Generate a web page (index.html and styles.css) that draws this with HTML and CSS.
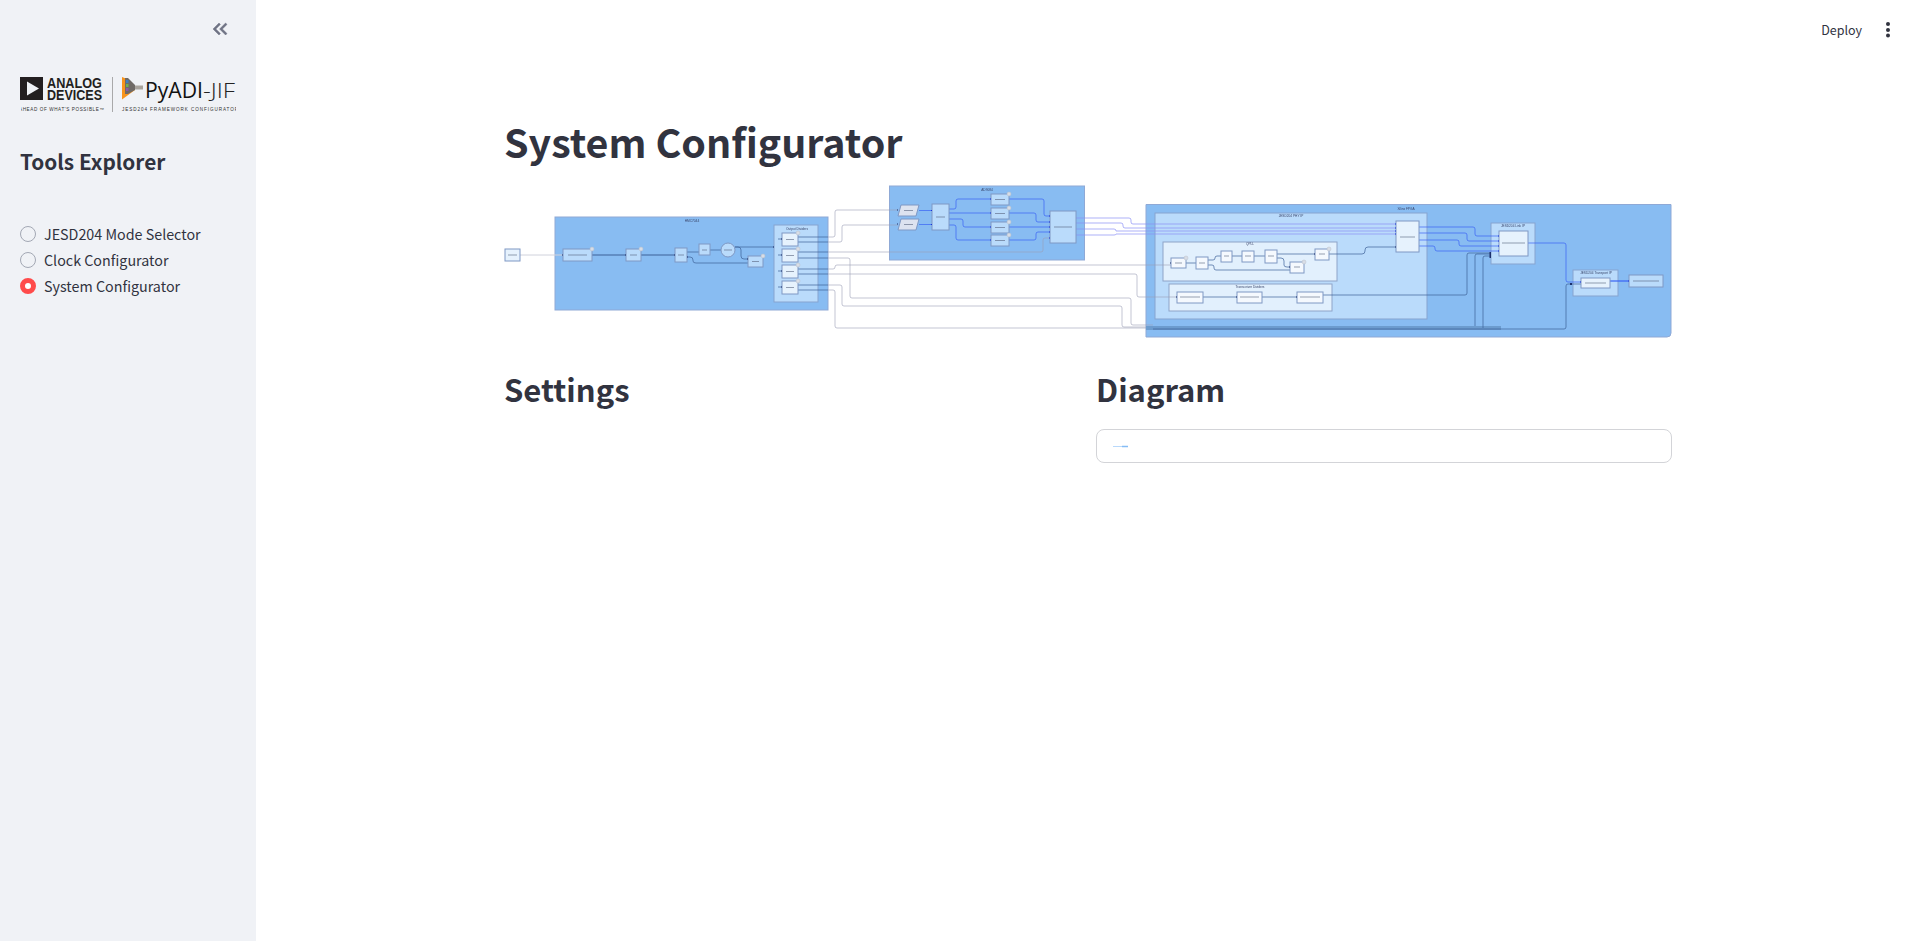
FILE: index.html
```html
<!DOCTYPE html>
<html lang="en">
<head>
    <meta charset="UTF-8">
    <meta name="viewport" content="width=device-width, initial-scale=1.0">
    <title>System Configurator</title>
    <link rel="stylesheet" href="styles.css">
</head>
<body>
    <aside class="sidebar">
        <div class="sidebar-top">
            <svg class="collapse-icon" viewBox="0 0 24 24" width="24" height="24">
                <path d="M17.59 18 19 16.59 14.42 12 19 7.41 17.59 6l-6 6zM11 18l1.41-1.41L7.83 12l4.58-4.59L11 6l-6 6z"/>
            </svg>
        </div>
        <svg class="logo" viewBox="20 76 216 37" width="216" height="37">
            <defs>
                <clipPath id="logo-clip"><rect x="21" y="76" width="215" height="37"/></clipPath>
            </defs>
            <rect x="20" y="77" width="23" height="23" fill="#231f20"/>
            <polygon points="27,81.5 39,88.5 27,95.5" fill="#f0f2f6"/>
            <text class="logo-adi" x="47" y="87.500" textLength="55" lengthAdjust="spacingAndGlyphs">ANALOG</text>
            <text class="logo-adi" x="47" y="99.500" textLength="55" lengthAdjust="spacingAndGlyphs">DEVICES</text>
            <g clip-path="url(#logo-clip)">
                <text class="logo-small" x="19" y="111" textLength="85" lengthAdjust="spacing">AHEAD OF WHAT'S POSSIBLE™</text>
                <text class="logo-small" x="122" y="111" textLength="116" lengthAdjust="spacing">JESD204 FRAMEWORK CONFIGURATOR</text>
            </g>
            <line x1="112.500" y1="77" x2="112.500" y2="112" stroke="#8a8a8a" stroke-width="0.7"/>
            <polygon points="122,77 127,79 135,86 135,90 122,99.500" fill="#f7941d"/>
            <polygon points="125,78 128,78 135,85 135,90 128,94 125,94" fill="#6f6a66"/>
            <rect x="126" y="80" width="2.500" height="3" fill="#3f7fbf"/>
            <rect x="126" y="84" width="2.500" height="3" fill="#6fae4f"/>
            <rect x="126" y="88" width="2.500" height="3" fill="#8c5aa5"/>
            <rect x="135" y="85.500" width="8" height="4" fill="#a8a39c"/>
            <text class="logo-pyadi" x="145" y="98" textLength="58" lengthAdjust="spacingAndGlyphs">PyADI</text>
            <text class="logo-jif" x="203" y="98" textLength="32" lengthAdjust="spacingAndGlyphs">-JIF</text>
        </svg>
        <h2 class="sidebar-title">Tools Explorer</h2>
        <div class="radio-list">
            <div class="radio-row"><span class="radio"></span>JESD204 Mode Selector</div>
            <div class="radio-row"><span class="radio"></span>Clock Configurator</div>
            <div class="radio-row"><span class="radio checked"></span>System Configurator</div>
        </div>
    </aside>

    <div class="main">
        <header class="topbar">
            <span class="deploy">Deploy</span>
            <svg class="kebab" viewBox="0 0 6 18" width="6" height="18">
                <circle cx="3" cy="3" r="2"/><circle cx="3" cy="9" r="2"/><circle cx="3" cy="14.600" r="2"/>
            </svg>
        </header>
        <main class="content">
            <h1>System Configurator</h1>

            <!-- coordinates in this svg are the page coordinates -->
            <svg class="diagram" viewBox="504 185 1168 155" width="1168" height="155">
                <!-- clusters -->
                <rect class="c1" x="555" y="217" width="273" height="93"/>
                <rect class="c1" x="889.500" y="186" width="195" height="74"/>
                <path class="c1" d="M1146 204.500H1671V333Q1671 337 1667 337H1146Z"/>
                <rect class="c2" x="774" y="225" width="44" height="77"/>
                <rect class="c2" x="1155" y="213" width="272" height="106"/>
                <rect class="c3" x="1163" y="242" width="174" height="39"/>
                <rect class="c3" x="1169" y="284" width="163" height="27"/>
                <rect class="c2" x="1491" y="223" width="44" height="41"/>
                <rect class="c2" x="1573" y="270" width="45" height="26"/>

                <!-- wires on white -->
                <g class="wire grey">
                    <path d="M828 237H833Q835 237 835 235V212Q835 210 837 210H898"/>
                    <path d="M828 242H840Q842 242 842 240V227Q842 225 844 225H898"/>
                    <path d="M828 252H1041Q1043 252 1043 250V240Q1043 238 1045 238H1050"/>
                    <path d="M828 258H848Q850 258 850 260V296Q850 298 852 298H1129Q1131 298 1131 300V323Q1131 325 1133 325H1153"/>
                    <path d="M828 269H833Q835 269 835 267Q835 265 837 265H1171"/>
                    <path d="M828 274H1135Q1137 274 1137 276V295Q1137 297 1139 297H1177"/>
                    <path d="M828 285H840Q842 285 842 287V304Q842 306 844 306H1120Q1122 306 1122 308V325Q1122 327 1124 327H1153"/>
                    <path d="M828 290H833Q835 290 835 292V326Q835 328 837 328H1153"/>
                </g>
                <path class="wire pale" d="M520 255H563"/>
                <g class="wire light-blue">
                    <path d="M1076 218H1129Q1131 218 1131 220V222Q1131 224 1133 224H1396"/>
                    <path d="M1076 223H1121Q1123 223 1123 225V226Q1123 228 1125 228H1396"/>
                    <path d="M1076 229H1114Q1116 229 1116 231H1396"/>
                    <path d="M1076 235H1114Q1116 235 1116 234H1396"/>
                </g>

                <!-- bottom band -->
                <rect class="band" x="1146" y="326" width="355" height="4"/>

                <!-- HMC7044 wires -->
                <g class="wire slate">
                    <path class="thick" d="M592 255H626M641 255H675"/>
                    <path d="M687 252H699M710 250H721M735 247H738Q741 247 741 250V256Q741 259 744 259H748"/>
                    <path d="M687 257H690Q693 257 693 260V261Q693 263 696 263H748"/>
                    <path d="M735 247H774"/>
                    <path d="M778 239H782M778 255H782M778 271H782M778 287H782"/>
                    <path d="M798 237H828M798 242H828M798 252H828M798 258H828M798 269H828M798 274H828M798 285H828M798 290H828"/>
                </g>
                <!-- AD9084 wires -->
                <g class="wire blue">
                    <path d="M919 210.500H932M919 224.500H932"/>
                    <path d="M949 209H954Q956 209 956 207V201Q956 199 958 199H991"/>
                    <path d="M949 213H991"/>
                    <path d="M949 219H961Q963 219 963 221V225Q963 227 965 227H991"/>
                    <path d="M949 225H954Q956 225 956 227V238Q956 240 958 240H991"/>
                    <path d="M1009 199H1042Q1044 199 1044 201V214Q1044 216 1046 216H1050"/>
                    <path d="M1009 213H1034Q1036 213 1036 215V220Q1036 222 1038 222H1050"/>
                    <path d="M1009 227H1050"/>
                    <path d="M1009 240H1034Q1036 240 1036 238V234Q1036 232 1038 232H1050"/>
                </g>
                <!-- FPGA wires -->
                <g class="wire slate">
                    <path d="M1186 263H1196M1208 260H1213Q1215 260 1215 258V258Q1215 256 1217 256H1221M1232 256H1242M1254 256H1265"/>
                    <path d="M1208 265H1212Q1214 265 1214 267V268Q1214 270 1216 270H1290"/>
                    <path d="M1277 254H1315M1277 258H1281Q1284 258 1284 261V265Q1284 267 1287 267H1290"/>
                    <path d="M1329 254H1362Q1365 254 1365 251V250Q1365 247 1368 247H1396"/>
                    <path d="M1203 297H1237M1262 297H1297"/>
                    <path d="M1323 295H1465Q1467 295 1467 293V255Q1467 253 1469 253H1491"/>
                    <path d="M1475 326V256Q1475 254 1477 254H1491"/>
                    <path d="M1483 328V258Q1483 256 1485 256H1491"/>
                    <path d="M1153 329H1564Q1566 329 1566 327V286Q1566 284 1568 284H1581"/>
                </g>
                <g class="wire blue">
                    <path d="M1419 227H1473Q1475 227 1475 229V234Q1475 236 1477 236H1499"/>
                    <path d="M1419 233H1465Q1467 233 1467 235V239Q1467 241 1469 241H1499"/>
                    <path d="M1419 240H1457Q1459 240 1459 242V244Q1459 246 1461 246H1499"/>
                    <path d="M1419 246H1433Q1435 246 1435 248V249Q1435 251 1437 251H1499"/>
                    <path d="M1528 243H1564Q1566 243 1566 245V280Q1566 282 1568 282H1581"/>
                    <path class="thick" d="M1610 281H1629"/>
                </g>

                <!-- nodes -->
                <rect class="n light" x="505" y="249" width="15" height="12"/>
                <rect class="n mid" x="563" y="249" width="29" height="12"/>
                <rect class="n mid" x="626" y="249" width="15" height="12"/>
                <rect class="n mid" x="675" y="248" width="12" height="14"/>
                <rect class="n mid" x="699" y="244" width="11" height="11"/>
                <circle class="n mid" cx="728" cy="250" r="7"/>
                <rect class="n mid" x="748" y="256" width="15" height="11"/>
                <rect class="n light" x="782" y="233" width="16" height="13"/>
                <rect class="n light" x="782" y="249" width="16" height="13"/>
                <rect class="n light" x="782" y="265" width="16" height="13"/>
                <rect class="n light" x="782" y="281" width="16" height="13"/>

                <polygon class="n pale-node" points="901,205 919,205 916,216 898,216"/>
                <polygon class="n pale-node" points="901,219 919,219 916,230 898,230"/>
                <rect class="n mid" x="932" y="204" width="17" height="26"/>
                <rect class="n mid" x="991" y="194" width="18" height="11"/>
                <rect class="n mid" x="991" y="208" width="18" height="11"/>
                <rect class="n mid" x="991" y="222" width="18" height="11"/>
                <rect class="n mid" x="991" y="235" width="18" height="11"/>
                <rect class="n mid" x="1050" y="211" width="26" height="32"/>

                <rect class="n light" x="1396" y="221" width="23" height="31"/>
                <rect class="n white" x="1171" y="258" width="15" height="10"/>
                <rect class="n white" x="1196" y="257" width="12" height="12"/>
                <rect class="n white" x="1221" y="251" width="11" height="11"/>
                <rect class="n white" x="1242" y="251" width="12" height="11"/>
                <rect class="n white" x="1265" y="250" width="12" height="13"/>
                <rect class="n white" x="1290" y="262" width="14" height="11"/>
                <rect class="n white" x="1315" y="249" width="14" height="11"/>
                <rect class="n white" x="1177" y="292" width="26" height="11"/>
                <rect class="n white" x="1237" y="292" width="25" height="11"/>
                <rect class="n white" x="1297" y="292" width="26" height="11"/>
                <rect class="n light" x="1499" y="231" width="29" height="25"/>
                <rect class="n light" x="1581" y="278" width="29" height="10"/>
                <rect class="n mid" x="1629" y="275" width="34" height="12"/>

                <!-- small badges on the nodes -->
                <g class="badge">
                    <circle cx="592" cy="249" r="2"/><circle cx="641" cy="249" r="2"/><circle cx="763" cy="256" r="2"/>
                    <circle cx="798" cy="233" r="2"/><circle cx="798" cy="249" r="2"/><circle cx="798" cy="265" r="2"/><circle cx="798" cy="281" r="2"/>
                    <circle cx="1009" cy="194" r="2"/><circle cx="1009" cy="208" r="2"/><circle cx="1009" cy="222" r="2"/><circle cx="1009" cy="235" r="2"/>
                    <circle cx="1186" cy="258" r="2"/><circle cx="1304" cy="262" r="2"/><circle cx="1329" cy="249" r="2"/>
                </g>

                <!-- ports -->
                <g class="port-dark">
                    <rect x="562" y="254.500" width="1" height="1"/><rect x="625" y="254.500" width="1" height="1"/><rect x="674" y="254.500" width="1" height="1"/>
                    <rect x="687" y="256.500" width="1" height="1"/><rect x="747" y="258.500" width="1" height="1"/><rect x="773" y="246.500" width="1" height="1"/>
                    <rect x="781" y="238.500" width="1" height="1"/><rect x="781" y="254.500" width="1" height="1"/><rect x="781" y="270.500" width="1" height="1"/><rect x="781" y="286.500" width="1" height="1"/>
                    <rect x="897" y="209.500" width="1" height="1"/><rect x="897" y="223.500" width="1" height="1"/>
                    <rect x="1170" y="262.500" width="1" height="1"/><rect x="1176" y="296.500" width="1" height="1"/><rect x="1236" y="296.500" width="1" height="1"/><rect x="1296" y="296.500" width="1" height="1"/>
                    <rect x="1314" y="253.500" width="1" height="1"/><rect x="1289" y="266.500" width="1" height="1"/>
                    <rect x="1489.500" y="252" width="1.500" height="6"/><rect x="1395" y="246.500" width="1" height="1"/>
                    <rect x="1570" y="283" width="2" height="2"/>
                </g>
                <g class="port-blue">
                    <rect x="931" y="210" width="1" height="1"/><rect x="931" y="224" width="1" height="1"/>
                    <rect x="990" y="198.500" width="1" height="1"/><rect x="990" y="212.500" width="1" height="1"/><rect x="990" y="226.500" width="1" height="1"/><rect x="990" y="239.500" width="1" height="1"/>
                    <rect x="1049" y="215.500" width="1" height="1"/><rect x="1049" y="221.500" width="1" height="1"/><rect x="1049" y="226.500" width="1" height="1"/><rect x="1049" y="231.500" width="1" height="1"/><rect x="1049" y="237.500" width="1" height="1"/>
                    <rect x="1395" y="223.500" width="1" height="1"/><rect x="1395" y="227.500" width="1" height="1"/><rect x="1395" y="230.500" width="1" height="1"/><rect x="1395" y="233.500" width="1" height="1"/>
                    <rect x="1498" y="235.500" width="1" height="1"/><rect x="1498" y="240.500" width="1" height="1"/><rect x="1498" y="245.500" width="1" height="1"/><rect x="1498" y="250.500" width="1" height="1"/>
                    <rect x="1580" y="281.500" width="1" height="1"/><rect x="1628" y="280.500" width="1" height="1"/>
                </g>

                <!-- node captions, too small to read in the picture -->
                <path class="caption" d="M508 255H517M568 255H587M630 255H637M678 255H684M702 250H707M724 250H732M752 261.500H759M786 239.500H794M786 255.500H794M786 271.500H794M786 287.500H794M904 210.500H913M904 224.500H913M936 217H945M995 199.500H1005M995 213.500H1005M995 227.500H1005M995 240.500H1005M1054 227H1072M1400 237H1415M1175 263H1182M1199 263H1205M1224 256H1229M1245 256H1251M1268 256H1274M1294 267H1300M1319 254H1325M1180 297H1200M1240 297H1259M1300 297H1320M1502 243H1525M1585 283H1606M1633 281H1659"/>

                <!-- cluster labels -->
                <text class="label" x="692" y="221.500">HMC7044</text>
                <text class="label" x="797" y="229.500">Output Dividers</text>
                <text class="label" x="987" y="190.500">AD9084</text>
                <text class="label" x="1406" y="210">Xilinx FPGA</text>
                <text class="label" x="1291" y="216.500">JESD204 PHY IP</text>
                <text class="label" x="1250" y="245">QPLL</text>
                <text class="label" x="1250" y="287.500">Transceiver Dividers</text>
                <text class="label" x="1513" y="226.500">JESD204 Link IP</text>
                <text class="label" x="1596" y="273.500">JESD204 Transport IP</text>
            </svg>

            <div class="columns">
                <section class="col">
                    <h2>Settings</h2>
                </section>
                <section class="col">
                    <h2>Diagram</h2>
                    <div class="diagram-card">
                        <svg class="mini" viewBox="0 0 16 3" width="16" height="3">
                            <path d="M0 1.500H9" stroke="#b9d9fb" stroke-width="1"/>
                            <path d="M9 1.500H15" stroke="#86bcf5" stroke-width="1.500"/>
                        </svg>
                    </div>
                </section>
            </div>
        </main>
    </div>
</body>
</html>
```

FILE: styles.css
```css
* {
    box-sizing: border-box;
}
html, body {
    height: 100%;
}
body {
    margin: 0;
    display: flex;
    overflow: hidden;
    background-color: #fff;
    color: #31333f;
    font-family: "Noto Sans CJK SC", "Noto Sans", sans-serif;
    font-size: 14.3px;
}

/* sidebar */
.sidebar {
    width: 256px;
    flex-shrink: 0;
    height: 100%;
    background-color: #f0f2f6;
    padding: 17px 20px 0 20px;
}
.sidebar-top {
    display: flex;
    justify-content: flex-end;
    padding-right: 4px;
}
.collapse-icon {
    fill: #6f7384;
    stroke: #6f7384;
    stroke-width: 0.5;
    display: block;
}
.logo {
    display: block;
    margin-top: 35px;
}
.logo-adi {
    font-family: "Liberation Sans", sans-serif;
    font-weight: 700;
    font-size: 14.5px;
    fill: #231f20;
}
.logo-small {
    font-family: "Liberation Sans", sans-serif;
    font-size: 4.6px;
    fill: #333;
}
.logo-pyadi {
    font-family: "Open Sans", sans-serif;
    font-size: 21px;
    fill: #111;
}
.logo-jif {
    font-family: "Open Sans", sans-serif;
    font-weight: 300;
    font-size: 21px;
    fill: #222;
}
.sidebar-title {
    margin: 32px 0 0 0;
    font-size: 20.800px;
    line-height: 32px;
    font-weight: 600;
}
.radio-list {
    margin-top: 44px;
}
.radio-row {
    display: flex;
    align-items: center;
    height: 26px;
    gap: 8px;
    line-height: 20px;
}
.radio {
    width: 16px;
    height: 16px;
    border-radius: 50%;
    background-color: #f0f2f6;
    border: 1px solid #a3a8b4;
    flex-shrink: 0;
}
.radio.checked {
    background-color: #fff;
    border: 5px solid #ff4b4b;
}

/* main area */
.main {
    flex: 1;
    height: 100%;
    min-width: 0;
}
.topbar {
    height: 60px;
    display: flex;
    justify-content: flex-end;
    align-items: center;
    padding-right: 29px;
    gap: 23px;
}
.deploy {
    font-size: 12.500px;
    margin-top: -2px;
}
.kebab {
    fill: #31333f;
    display: block;
}
.content {
    width: 1168px;
    margin: 0 auto;
}
h1 {
    margin: 55px 0 0 0;
    font-size: 39.400px;
    line-height: 52px;
    font-weight: 700;
}
.diagram {
    display: block;
    margin-top: 18px;
    filter: blur(0.35px);
}
.columns {
    display: grid;
    grid-template-columns: 1fr 1fr;
    gap: 16px;
}
.col h2 {
    margin: 25px 0 0 0;
    font-size: 31px;
    line-height: 48px;
    font-weight: 600;
}
.diagram-card {
    margin-top: 16px;
    height: 34px;
    border: 1px solid #d3d4d8;
    border-radius: 8px;
    padding-left: 16px;
    display: flex;
    align-items: center;
}
.mini {
    display: block;
}

/* diagram parts */
.c1 {
    fill: #88bcf2;
    stroke: #8fa9d6;
    stroke-width: 1;
}
.c2 {
    fill: #badbfb;
    stroke: #86a3cf;
    stroke-width: 1;
}
.c3 {
    fill: #e2f0fd;
    stroke: #8ea4c8;
    stroke-width: 1;
}
.band {
    fill: #6c9ccf;
}
.wire {
    fill: none;
    stroke-width: 0.7;
}
.wire .thick {
    stroke-width: 1.2;
}
.wire.grey {
    stroke: #9a9db5;
    stroke-width: 0.6;
}
.pale {
    stroke: #d0d2dc;
    stroke-width: 1;
}
.light-blue {
    stroke: #8a8ff5;
}
.blue {
    stroke: #3a63f5;
}
.slate {
    stroke: #3d6198;
}
.n {
    stroke: #7f98c4;
    stroke-width: 1;
}
.n.light {
    fill: #e6f2fd;
}
.n.mid {
    fill: #badbfb;
}
.n.white {
    fill: #f5f9fe;
}
.n.pale-node {
    fill: #dde3f0;
}
.badge circle {
    fill: #d8dde6;
    stroke: #b8bec9;
    stroke-width: 0.5;
}
.port-dark {
    fill: #1c2f6b;
}
.port-blue {
    fill: #1a35d8;
}
.caption {
    fill: none;
    stroke: #56627c;
    stroke-width: 0.6;
}
.label {
    font-family: "Liberation Sans", sans-serif;
    font-size: 3.200px;
    text-anchor: middle;
    fill: #39456a;
}
```
